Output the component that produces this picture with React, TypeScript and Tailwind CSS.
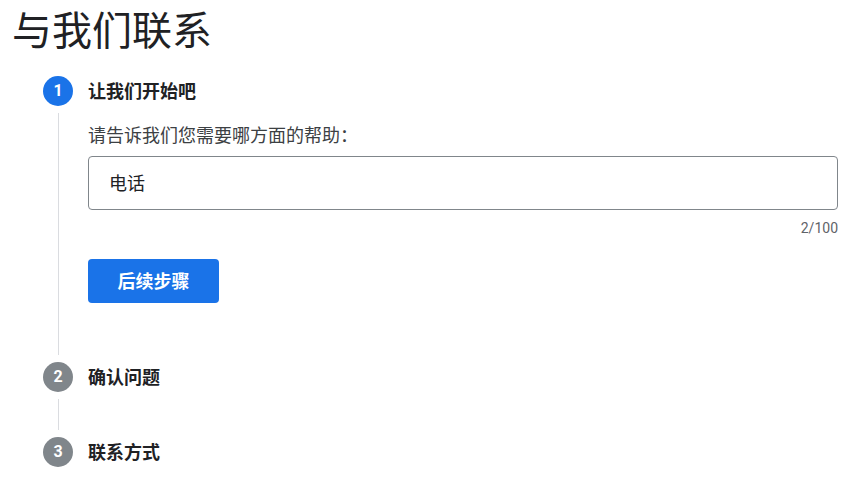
import React from "react";

const font = { fontFamily: "Roboto, 'Noto Sans CJK SC', sans-serif" };

const Step = ({
  num,
  label,
  active,
  last,
  children,
}: {
  num: number;
  label: string;
  active?: boolean;
  last?: boolean;
  children?: React.ReactNode;
}) => {
  return (
    <div className="flex">
      <div className="flex w-[30px] flex-col items-center">
        <div
          className={
            active
              ? "flex h-[30px] w-[30px] items-center justify-center rounded-full bg-[#1a73e8] text-[16px] font-bold text-white"
              : "flex h-[30px] w-[30px] items-center justify-center rounded-full bg-[#80868b] text-[16px] font-bold text-white"
          }
        >
          {num}
        </div>
        {!last && <div className="my-[7px] w-px flex-1 bg-[#dadce0]" />}
      </div>
      <div className={last ? "flex-1 pl-[15px]" : "flex-1 pb-[45px] pl-[15px]"}>
        <div className="flex h-[30px] items-center text-[18px] font-bold text-[#202124]">{label}</div>
        {children}
      </div>
    </div>
  );
};

export default function App() {
  return (
    <div className="min-h-screen bg-white pl-[12px] pr-[22px] pt-[8px]" style={font}>
      <h1 className="text-[40px] leading-[48px] font-normal text-[#202124]">与我们联系</h1>
      <div className="mt-[20px] pl-[31px]">
        <Step num={1} label="让我们开始吧" active>
          <div className="pb-[14px]">
            <p className="mt-[18px] text-[18px] leading-[24px] text-[#3c4043]">请告诉我们您需要哪方面的帮助：</p>
            <div className="mt-[8px] flex h-[54px] items-center rounded-[4px] border border-[#80868b] px-[20px] text-[18px] text-[#202124]">
              电话
            </div>
            <div className="mt-[10px] text-right text-[14px] leading-[16px] text-[#5f6368]">2/100</div>
            <button className="mt-[23px] h-[44px] w-[131px] rounded-[4px] bg-[#1a73e8] text-[18px] font-bold text-white">
              后续步骤
            </button>
          </div>
        </Step>
        <Step num={2} label="确认问题" />
        <Step num={3} label="联系方式" last />
      </div>
    </div>
  );
}
